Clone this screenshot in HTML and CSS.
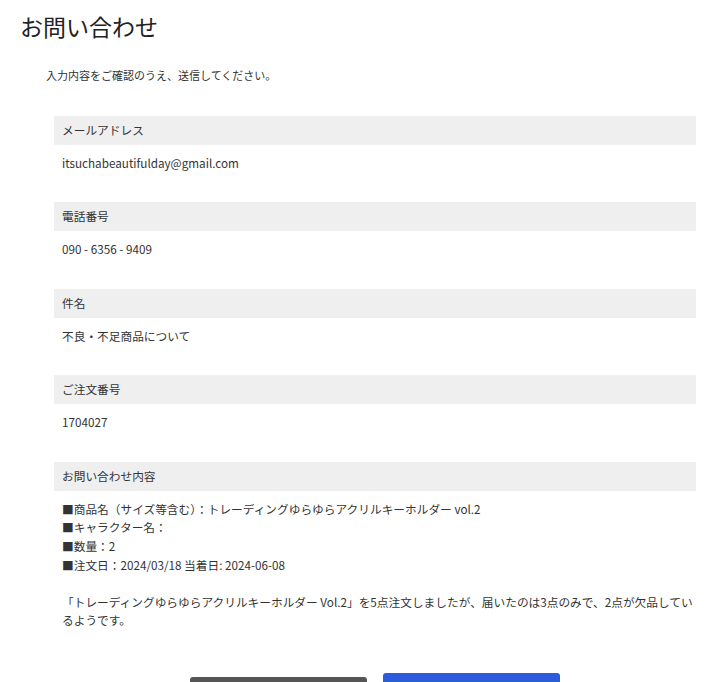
FILE: index.html
```html
<!DOCTYPE html>
<html lang="ja">
<head>
<meta charset="utf-8">
<title>お問い合わせ</title>
<link rel="stylesheet" href="styles.css">
</head>
<body>
<div class="page">
  <h1 class="title">お問い合わせ</h1>
  <p class="intro">入力内容をご確認のうえ、送信してください。</p>
  <div class="form">
    <div class="field">
      <div class="label">メールアドレス</div>
      <div class="value">itsuchabeautifulday@gmail.com</div>
    </div>
    <div class="field">
      <div class="label">電話番号</div>
      <div class="value">090 - 6356 - 9409</div>
    </div>
    <div class="field">
      <div class="label">件名</div>
      <div class="value">不良・不足商品について</div>
    </div>
    <div class="field">
      <div class="label">ご注文番号</div>
      <div class="value">1704027</div>
    </div>
    <div class="field">
      <div class="label">お問い合わせ内容</div>
      <div class="value multiline">■商品名（サイズ等含む）：トレーディングゆらゆらアクリルキーホルダー vol.2
■キャラクター名：
■数量：2
■注文日：2024/03/18 当着日: 2024-06-08

「トレーディングゆらゆらアクリルキーホルダー Vol.2」を5点注文しましたが、届いたのは3点のみで、2点が欠品しているようです。</div>
    </div>
    <div class="actions">
      <button class="btn btn-back" type="button">戻る</button>
      <button class="btn btn-send" type="button">送信する</button>
    </div>
  </div>
</div>
</body>
</html>
```
FILE: styles.css
```css
* { box-sizing: border-box; }
html, body { margin: 0; padding: 0; background: #fff; }
body {
  font-family: "Noto Sans CJK JP", "Noto Sans", sans-serif;
  color: #333;
}
.page {
  padding: 8px 14px 0 20px;
}
.title {
  margin: 0;
  font-size: 23px;
  font-weight: 400;
  line-height: 36px;
  color: #222;
}
.intro {
  margin: 23px 0 0 0;
  padding-left: 26px;
  font-size: 11px;
  line-height: 17.6px;
}
.form {
  margin: 31px 0 0 34px;
}
.field {
  margin-bottom: 22px;
  font-size: 11.7px;
  line-height: 18.6px;
}
.label {
  background: #efefef;
  padding: 5.2px 8px;
}
.value {
  padding: 9px 2px 8px 8px;
}
.multiline {
  white-space: pre-line;
}
.actions {
  display: flex;
  justify-content: center;
  align-items: flex-start;
  gap: 16px;
  margin-top: 35px;
}
.btn {
  width: 177px;
  height: 60px;
  border: 0;
  border-radius: 3px;
  color: #fff;
  font-family: inherit;
  font-size: 14px;
}
.btn-back {
  background: #555;
  margin-top: 4px;
}
.btn-send {
  background: #2c5bdc;
}
```
